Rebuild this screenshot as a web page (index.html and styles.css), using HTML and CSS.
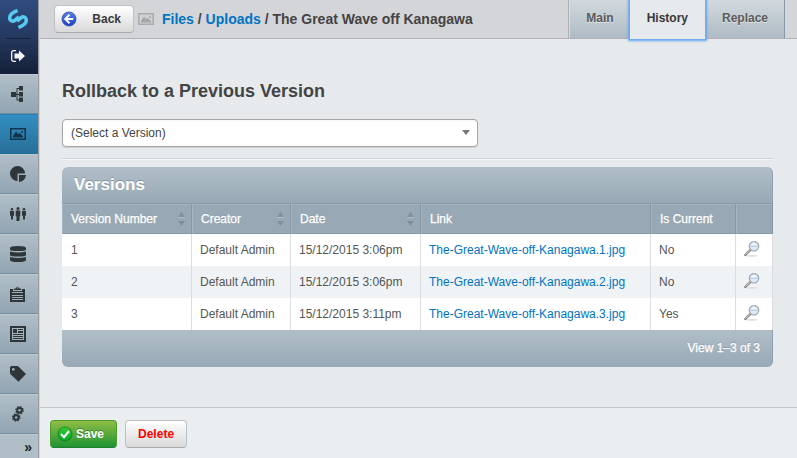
FILE: index.html
```html
<!DOCTYPE html>
<html lang="en">
<head>
<meta charset="utf-8">
<title>Files – The Great Wave off Kanagawa</title>
<link rel="stylesheet" href="styles.css">
</head>
<body>
<svg class="defs" aria-hidden="true">
  <defs>
    <linearGradient id="ball-blue" x1="0" y1="0" x2="0" y2="1"><stop offset="0" stop-color="#5b86e6"/><stop offset="1" stop-color="#1c3fc0"/></linearGradient>
    <linearGradient id="ball-green" x1="0" y1="0" x2="0" y2="1"><stop offset="0" stop-color="#35c935"/><stop offset="1" stop-color="#0aa52a"/></linearGradient>
    <symbol id="icon-magnifier" viewBox="0 0 16 16">
      <ellipse cx="8" cy="14.8" rx="6.5" ry=".9" fill="#dedede"/>
      <path d="M1.300 14L6.500 8.900" stroke="#858585" stroke-width="2.400" stroke-linecap="round"/>
      <path d="M1.600 13.500L6.300 9" stroke="#d0d0d0" stroke-width="1"/>
      <circle cx="10" cy="5.300" r="4.700" fill="#dce9f8" stroke="#a3a6aa" stroke-width="1.200"/>
      <path d="M6.400 5.300h7.200" stroke="#b4cfec" stroke-width="1"/>
      <path d="M6.900 4a3.500 3.500 0 0 1 6.200 0z" fill="#f2f8fe"/>
    </symbol>
    <symbol id="icon-sort" viewBox="0 0 7 14">
      <path d="M0 5L3.500 0 7 5zM0 9h7L3.500 14z" fill="#7f919e"/>
      <path d="M0 5.500h7" stroke="#b1bfc9"/>
    </symbol>
  </defs>
</svg>
<div class="app">
  <nav class="menu" aria-label="Main menu">
    <div class="menu-top">
      <a class="logo" href="#" aria-label="Home">
        <svg width="22" height="22" viewBox="0 0 22 22" fill="none" stroke="#58c9f0" stroke-width="3.600">
          <path d="M10.500 2.300C6.500 4 2.700 6.300 2.700 9.400C2.700 12.800 5.500 14 8 12.200L12 9"/>
          <path d="M11.500 19.700C15.500 18 19.300 15.700 19.300 12.600C19.300 9.200 16.500 8 14 9.800L10 13"/>
        </svg>
      </a>
      <a class="logout" href="#" aria-label="Log out">
        <svg width="14" height="12" viewBox="0 0 14 12"><path d="M5 .7H2.500Q.7.700.7 2.500v7Q.7 11.300 2.500 11.300H5" fill="none" stroke="#f2f4f7" stroke-width="1.300"/><path d="M3.500 3.500H8V.5L14 6 8 11.500v-3H3.500z" fill="#f2f4f7"/></svg>
      </a>
    </div>
    <a class="item" href="#" aria-label="Pages"><svg width="16" height="16" viewBox="0 0 16 16"><path d="M1 6h5v5H1zM9 0h4v4.500H9zM9 6h4v4.500H9zM9 11.500h4V16H9zM5 8h4v1H5zM6.500 2H9v1H7.500v10.500H9v1H6.500z"/></svg></a>
    <a class="item current" href="#" aria-label="Files"><svg width="16" height="12" viewBox="0 0 16 12"><path fill-rule="evenodd" d="M0 0h16v12H0zM1.500 1.500v9h13v-9z"/><path d="M3 9.500V8l3-4.500 2 2.500 1.500-1 3.500 3v1.500z"/><circle cx="12" cy="4" r="1"/></svg></a>
    <a class="item" href="#" aria-label="Reports"><svg width="16" height="16" viewBox="0 0 16 16"><path d="M7.500 7.500H15A7.500 7.500 0 1 0 7.500 15z"/><path d="M9 9h7q-.8 6-7 7z"/></svg></a>
    <a class="item" href="#" aria-label="Security"><svg width="16" height="14" viewBox="0 0 16 14"><circle cx="2" cy="2.300" r="1.300"/><circle cx="14" cy="2.300" r="1.300"/><circle cx="8" cy="1.500" r="1.500"/><path d="M0 4h4v4.500l-1 .5v3.500H1V9L0 8.500zM12 4h4v4.500l-1 .5v3.500h-2V9l-1-.5zM5.700 3.500h4.600v5.500l-.8.500V14h-3V9.500L5.700 9z"/></svg></a>
    <a class="item" href="#" aria-label="Database"><svg width="16" height="16" viewBox="0 0 16 16"><path d="M0 2Q0 0 8 0t8 2v1.500Q16 5 8 5T0 3.500zM0 5.500Q8 7.500 16 5.500V9q0 1.500-8 1.500T0 9zM0 11q8 2 16 0v3q0 2-8 2t-8-2z"/></svg></a>
    <a class="item" href="#" aria-label="Tasks"><svg width="16" height="16" viewBox="0 0 16 16"><path fill-rule="evenodd" d="M0 3h3v2h9V3h3v13H0zM2 6v1h11V6zM2 9v1h11V9zM2 11v1h11v-1zM2 13v1h11v-1z"/><path d="M3.500 4q.2-1.500 2.500-1.800a1.500 1.500 0 0 1 3 0Q11.300 2.500 11.500 4z"/><circle cx="7.500" cy="1.900" r=".6" fill="#a9b7c0"/></svg></a>
    <a class="item" href="#" aria-label="News"><svg width="16" height="16" viewBox="0 0 16 16"><path fill-rule="evenodd" d="M0 0h16v16H0zM2 2v12h12V2z"/><path d="M3 3h4v4H3zM8 3h5v1H8zM8 5h5v2H8zM3 8h10v1H3zM3 10h10v1H3zM3 12h10v1H3z"/></svg></a>
    <a class="item" href="#" aria-label="Tags"><svg width="16" height="16" viewBox="0 0 16 16"><path fill-rule="evenodd" d="M0 1.500Q0 0 1.500 0H7q1 0 1.700.7L16 8 8.500 15.700.8 8.500Q0 7.700 0 6.500zM3.300 2a1.400 1.400 0 1 0 .1 0z"/></svg></a>
    <a class="item" href="#" aria-label="Settings"><svg width="16" height="16" viewBox="0 0 16 16" fill="none" stroke="#2f363a"><circle cx="9.500" cy="4.300" r="2.300" stroke-width="2"/><circle cx="9.500" cy="4.300" r="3.600" stroke-width="1.400" stroke-dasharray="1.600 1.230"/><circle cx="6.200" cy="11.500" r="2.300" stroke-width="2"/><circle cx="6.200" cy="11.500" r="3.600" stroke-width="1.400" stroke-dasharray="1.600 1.230"/></svg></a>
    <button class="toggle" type="button" aria-label="Expand menu">»</button>
  </nav>
  <main class="content">
    <header class="header">
      <button class="btn back" type="button">
        <svg width="16" height="16" viewBox="0 0 16 16"><circle cx="8" cy="8" r="7" fill="url(#ball-blue)" stroke="#2746b0" stroke-width=".8"/><path d="M8.500 3.800L4.300 8l4.200 4.200M4.800 8h7.400" fill="none" stroke="#fff" stroke-width="2"/></svg>
        <span>Back</span>
      </button>
      <svg class="crumb-icon" width="16" height="12" viewBox="0 0 16 12"><path d="M.75.750h14.500v10.500H.75z" fill="#d0d1d3" stroke="#aaabad" stroke-width="1.500"/><path d="M3 9.500V8l3-4.500 2 2.500 1.500-1 3.500 3v1.500z" fill="#a4a5a7"/><circle cx="12" cy="4" r="1" fill="#a4a5a7"/></svg>
      <div class="crumbs"><a href="#">Files</a> / <a href="#">Uploads</a> / The Great Wave off Kanagawa</div>
      <div class="tabs" role="tablist">
        <button type="button" role="tab">Main</button>
        <button type="button" role="tab" class="active" aria-selected="true">History</button>
        <button type="button" role="tab">Replace</button>
      </div>
    </header>
    <section class="body">
      <label class="heading" for="version">Rollback to a Previous Version</label>
      <div class="select">
        <select id="version"><option>(Select a Version)</option><option>1</option><option>2</option><option>3</option></select>
      </div>
      <div class="grid">
        <h2>Versions</h2>
        <table>
          <colgroup><col class="c-number"><col class="c-creator"><col class="c-date"><col><col class="c-current"><col class="c-view"></colgroup>
          <thead>
            <tr>
              <th><div class="sortable">Version Number <svg width="7" height="14"><use href="#icon-sort"/></svg></div></th>
              <th><div class="sortable">Creator <svg width="7" height="14"><use href="#icon-sort"/></svg></div></th>
              <th><div class="sortable">Date <svg width="7" height="14"><use href="#icon-sort"/></svg></div></th>
              <th>Link</th><th>Is Current</th><th></th>
            </tr>
          </thead>
          <tbody>
            <tr><td>1</td><td>Default Admin</td><td>15/12/2015 3:06pm</td><td><a href="#">The-Great-Wave-off-Kanagawa.1.jpg</a></td><td>No</td><td><a href="#" aria-label="View"><svg width="16" height="16"><use href="#icon-magnifier"/></svg></a></td></tr>
            <tr><td>2</td><td>Default Admin</td><td>15/12/2015 3:06pm</td><td><a href="#">The-Great-Wave-off-Kanagawa.2.jpg</a></td><td>No</td><td><a href="#" aria-label="View"><svg width="16" height="16"><use href="#icon-magnifier"/></svg></a></td></tr>
            <tr><td>3</td><td>Default Admin</td><td>15/12/2015 3:11pm</td><td><a href="#">The-Great-Wave-off-Kanagawa.3.jpg</a></td><td>Yes</td><td><a href="#" aria-label="View"><svg width="16" height="16"><use href="#icon-magnifier"/></svg></a></td></tr>
          </tbody>
        </table>
        <div class="pager">View 1–3 of 3</div>
      </div>
    </section>
    <footer class="actions">
      <button class="btn save" type="button">
        <svg width="16" height="16" viewBox="0 0 16 16"><circle cx="8" cy="8" r="7" fill="url(#ball-green)" stroke="#07801c" stroke-width=".8"/><path d="M4 8l3 3.200L12 5" fill="none" stroke="#fff" stroke-width="2"/></svg>
        <span>Save</span>
      </button>
      <button class="btn delete" type="button">Delete</button>
    </footer>
  </main>
</div>
</body>
</html>
```
FILE: styles.css
```css
* { box-sizing: border-box; }
body {
  margin: 0;
  font: 12px/16px "Liberation Sans", Arial, sans-serif;
  color: #444;
  background: #e6eaed;
}
a { color: #0073c1; text-decoration: none; }
button, select { font: inherit; color: inherit; }
svg { display: block; flex: none; }
.defs { position: absolute; width: 0; height: 0; }
.app { display: flex; height: 100vh; overflow: hidden; }

/* Left menu */
.menu {
  display: flex;
  flex-direction: column;
  flex: none;
  width: 39px;
  border-right: 1px solid #9b9da0;
  background: #b0bec7;
}
.menu-top {
  flex: none;
  height: 74px;
  background: linear-gradient(#304d80, #25395f 50%, #152038);
}
.logo, .logout, .item { display: flex; align-items: center; justify-content: center; }
.logo { height: 39px; margin: 0 8px 0 6px; border-bottom: 1px solid #152139; }
.logout { height: 34px; padding-right: 2px; }
.item {
  flex: none;
  height: 40px;
  padding-right: 2px;
  background: linear-gradient(#b0bec7, #92a5b2);
  border-top: 1px solid #bfcad2;
  border-bottom: 1px solid #748d9d;
  fill: #2f363a;
}
.item.current {
  background: linear-gradient(#338dc1, #287099);
  border-top-color: #2580b3;
  border-bottom-color: #1f6d9a;
  fill: #10344a;
}
.toggle {
  flex: 1;
  padding: 0 6px 0 0;
  border: 0;
  border-top: 1px solid #bfcad2;
  background: none;
  color: #1f1f1f;
  font-size: 14px;
  font-weight: bold;
  text-align: right;
}

/* Main column */
.content {
  display: flex;
  flex-direction: column;
  flex: 1;
  min-width: 0;
  border-left: 1px solid #d0d3d6;
}
.header {
  display: flex;
  flex: none;
  align-items: center;
  height: 39px;
  padding-left: 14px;
  background: #d4d5d8;
  border-bottom: 1px solid #b3b0b7;
}
.btn {
  display: flex;
  align-items: center;
  justify-content: center;
  height: 28px;
  padding: 0 8px;
  border: 1px solid #bfc0c3;
  border-bottom-color: #a9aaad;
  border-radius: 4px;
  background: linear-gradient(#fff, #d9d9d9);
  font-weight: bold;
}
.back { justify-content: space-between; width: 80px; padding: 0 12px 0 6px; color: #393939; }
.crumb-icon { margin: 0 8px 0 4px; }
.crumbs { flex: 1; font-size: 14px; font-weight: bold; white-space: nowrap; }
.tabs { display: flex; align-self: stretch; margin-right: 12px; border-left: 1px solid #aeb0b4; border-right: 1px solid #8399a7; }
.tabs button {
  padding: 0 16px 2px;
  border: 0;
  border-left: 1px solid #d8dde0;
  background: linear-gradient(#d2d9de, #aebbc4);
  color: #5b5b5b;
  font-weight: bold;
  text-shadow: 0 1px 0 #dfe4e7;
}
.tabs .active {
  z-index: 1;
  margin-bottom: -1px;
  padding: 0 17px 3px;
  border: 0;
  background: #e6eaed;
  color: #393939;
  box-shadow: 0 0 0 1px #6fadf2, 0 0 2px 2px #5ea5f2;
}

.body { flex: 1; padding: 40px 24px 0 22px; overflow: hidden; }
.heading { display: block; font-size: 18px; line-height: 24px; font-weight: bold; }
.select { position: relative; width: 416px; max-width: 100%; margin: 16px 0 11px; }
.select select {
  display: block;
  width: 100%;
  height: 28px;
  padding: 0 8px;
  appearance: none;
  border: 1px solid #a6a6a6;
  border-radius: 4px;
  background: linear-gradient(#f7f7f7, #fff 12%, #fff 88%, #f7f7f7);
  box-shadow: 0 1px 1px #ccd0d3;
}
.select::after {
  content: "";
  position: absolute;
  top: 11px;
  right: 8px;
  border: 4px solid transparent;
  border-top: 5px solid #777;
  border-bottom: 0;
  pointer-events: none;
}

/* Versions grid */
.grid {
  border-top: 1px solid #ccd2d6;
  box-shadow: inset 0 1px 0 #f6f7f8;
  padding-top: 8px;
}
.grid h2, .pager, th { color: #fff; text-shadow: 0 -1px 0 #84949f; }
.grid h2 {
  margin: 0;
  height: 36px;
  padding: 0 12px;
  border-radius: 6px 6px 0 0;
  border-right: 1px solid #8fa1ae;
  background: linear-gradient(#b0bec7, #98a9b5);
  font-size: 17px;
  line-height: 35px;
}
table { width: 100%; border-collapse: separate; border-spacing: 0; table-layout: fixed; }
.c-number { width: 130px; }
.c-creator { width: 99px; }
.c-date { width: 130px; }
.c-current { width: 85px; }
.c-view { width: 37px; }
th {
  height: 31px;
  padding: 0 6px 0 8px;
  border: 1px solid #8698a5;
  border-left-color: #a6b5bf;
  background: #98a9b5;
  box-shadow: inset 0 1px 0 #a6b5bf;
  font-weight: normal;
  -webkit-text-stroke: 0.3px #fff;
  text-align: left;
  white-space: nowrap;
}
.sortable { display: flex; align-items: center; justify-content: space-between; }
td {
  height: 32px;
  padding: 0 8px;
  border-right: 1px solid #dbdde0;
  background: #fff;
  color: #555;
  white-space: nowrap;
}
td:first-child { padding-left: 9px; }
td svg { margin-bottom: 2px; }
tbody tr:nth-child(even) td { background: #f0f3f5; }
.pager {
  height: 37px;
  padding: 0 12px;
  border-radius: 0 0 6px 6px;
  border-right: 1px solid #8fa1ae;
  background: linear-gradient(#b0bec7, #98a9b5);
  -webkit-text-stroke: 0.3px #fff;
  line-height: 36px;
  text-align: right;
}

/* Bottom actions */
.actions {
  display: flex;
  flex: none;
  gap: 8px;
  padding: 12px 10px 10px;
  border-top: 1px solid #c5c6c9;
  background: #ebeef1;
}
.save {
  gap: 3px;
  padding: 0 12px 0 6px;
  border-color: #4c9c2c;
  border-bottom-color: #1e7d2f;
  background: linear-gradient(#8fbd45, #1f9433);
  color: #fff;
  text-shadow: 0 -1px 0 #35832f;
}
.delete { padding: 0 12px; color: #f00; }
```
